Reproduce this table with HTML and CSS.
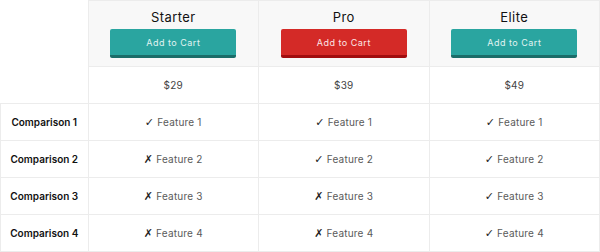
FILE: index.html
```html
<!DOCTYPE html>
<html>
<head>
<meta charset="utf-8">
<link rel="stylesheet" href="styles.css">
</head>
<body>
<table class="pricing">
  <thead>
    <tr class="head-row">
      <th class="blank"></th>
      <th class="plan"><div class="plan-name">Starter</div><button class="cart teal">Add to Cart</button></th>
      <th class="plan"><div class="plan-name">Pro</div><button class="cart red">Add to Cart</button></th>
      <th class="plan"><div class="plan-name">Elite</div><button class="cart teal">Add to Cart</button></th>
    </tr>
  </thead>
  <tbody>
    <tr class="price-row">
      <td class="blank"></td>
      <td>$29</td>
      <td>$39</td>
      <td>$49</td>
    </tr>
    <tr>
      <td class="label">Comparison 1</td>
      <td><span class="mark">✓</span> Feature 1</td>
      <td><span class="mark">✓</span> Feature 1</td>
      <td><span class="mark">✓</span> Feature 1</td>
    </tr>
    <tr>
      <td class="label">Comparison 2</td>
      <td><span class="mark">✗</span> Feature 2</td>
      <td><span class="mark">✓</span> Feature 2</td>
      <td><span class="mark">✓</span> Feature 2</td>
    </tr>
    <tr>
      <td class="label">Comparison 3</td>
      <td><span class="mark">✗</span> Feature 3</td>
      <td><span class="mark">✗</span> Feature 3</td>
      <td><span class="mark">✓</span> Feature 3</td>
    </tr>
    <tr>
      <td class="label">Comparison 4</td>
      <td><span class="mark">✗</span> Feature 4</td>
      <td><span class="mark">✗</span> Feature 4</td>
      <td><span class="mark">✓</span> Feature 4</td>
    </tr>
  </tbody>
</table>
</body>
</html>
```
FILE: styles.css
```css
html, body {
  margin: 0;
  padding: 0;
  background: #fff;
}
body {
  font-family: Inter, "Noto Sans", "DejaVu Sans", sans-serif;
}
.pricing {
  width: 600px;
  border-collapse: collapse;
  table-layout: fixed;
}
.pricing th,
.pricing td {
  border: 1px solid #ececec;
  text-align: center;
  padding: 0;
  font-size: 10px;
  color: #5a5a5a;
  height: 36px;
  letter-spacing: 0.2px;
}
.pricing th.blank,
.pricing td.blank {
  border: none;
  background: #fff;
}
.pricing .price-row td.blank {
  border-bottom: 1px solid #ececec;
}
.pricing th:first-child,
.pricing td:first-child {
  width: 87px;
}
.head-row th.plan {
  background: #f8f8f8;
  height: 65px;
  vertical-align: top;
  font-weight: normal;
}
.plan-name {
  font-size: 13px;
  color: #111;
  margin-top: 8px;
  line-height: 16px;
  letter-spacing: 0.4px;
}
.cart {
  display: block;
  margin: 4px auto 0;
  width: 126px;
  height: 29px;
  border: none;
  border-radius: 2px;
  font-family: inherit;
  font-size: 9px;
  letter-spacing: 0.5px;
  padding: 0;
}
.cart.teal {
  background: #2aa5a0;
  border-bottom: 3px solid #1b6d69;
  color: #e0f4f2;
}
.cart.red {
  background: #d42a27;
  border-bottom: 3px solid #a10d0f;
  color: #fbe6e6;
}
.price-row td {
  color: #444;
}
.mark {
  font-family: "DejaVu Sans", sans-serif;
  font-size: 11px;
  color: #222;
}
.pricing td.label {
  color: #111;
  font-weight: 600;
  letter-spacing: 0;
}
```
